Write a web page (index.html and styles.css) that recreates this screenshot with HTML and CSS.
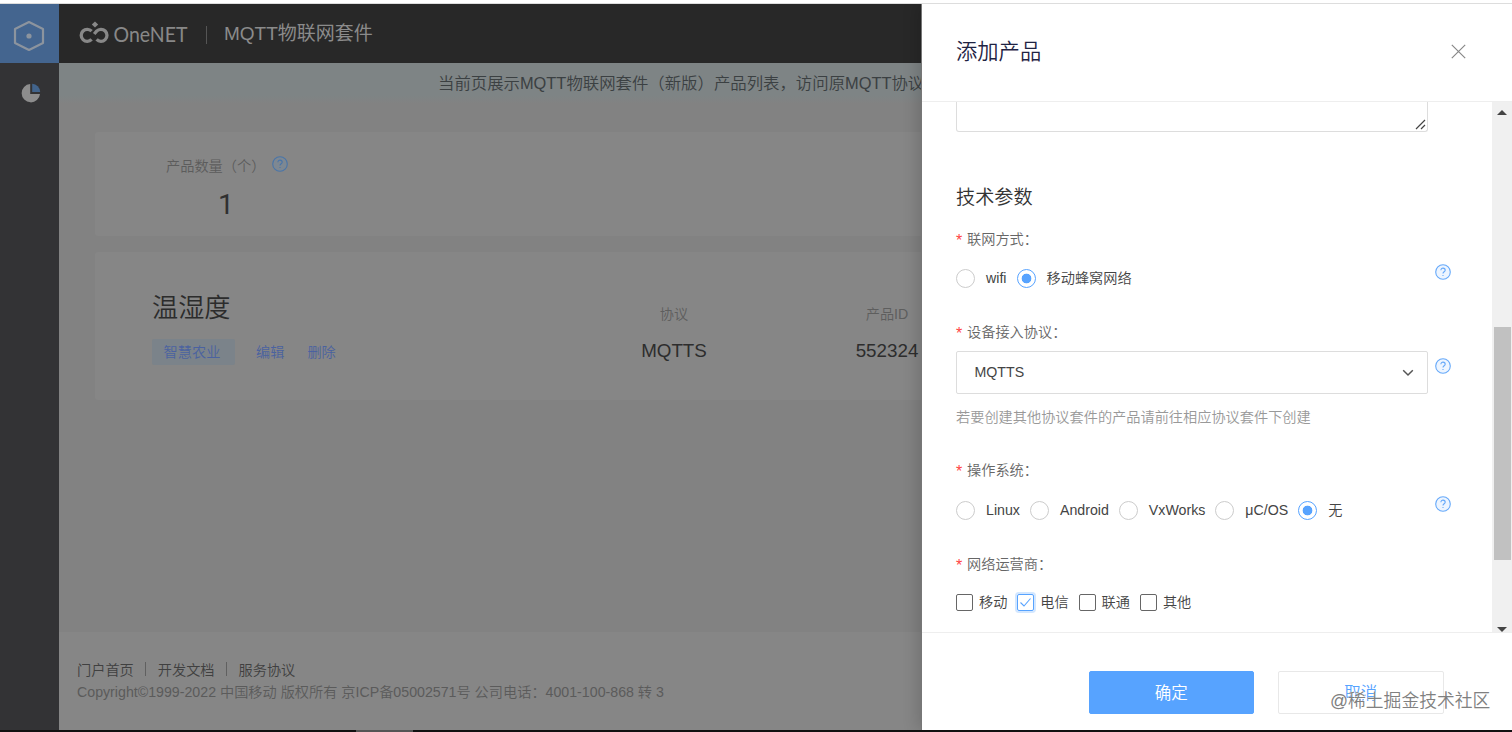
FILE: index.html
```
<!DOCTYPE html>
<html lang="zh-CN">
<head>
  <meta charset="UTF-8">
  <title>MQTT物联网套件</title>
  <link rel="stylesheet" href="styles.css">
</head>
<body>
  <svg class="defs" width="0" height="0">
    <symbol id="help" viewBox="0 0 16 16">
      <circle cx="8" cy="8" r="7.3" />
      <path d="M5.9 6.3c0-3 4.3-2.7 4.3-.1 0 1.5-2.2 1.6-2.2 3.2M8 10.9v1" />
    </symbol>
  </svg>

  <div class="edge-top"></div>
  <div class="app">
    <!-- 侧边栏 -->
    <div class="sidebar">
      <div class="side-logo">
        <svg width="32" height="32" viewBox="0 0 32 32">
          <path d="M16 2 30 9v14l-14 7L2 23V9z" fill="none" stroke="#8c949e" stroke-width="2.2" stroke-linejoin="round" />
          <circle cx="16" cy="16" r="2.6" fill="#8c949e" />
        </svg>
      </div>
      <div class="side-item">
        <svg width="20" height="20" viewBox="0 0 20 20">
          <path d="M9.2 1A9.2 9.2 0 1 0 19 11H9.2z" fill="#8d8d8d" />
          <path d="M11.2.8V9h8A8.6 8.6 0 0 0 11.2.8z" fill="#42648c" />
        </svg>
      </div>
    </div>

    <div class="main">
      <div class="header">
        <svg class="brand" width="110" height="26" viewBox="0 0 110 26">
          <g fill="none" stroke="#888" stroke-width="3.3">
            <path d="M12.6 10.2A6 6 0 1 0 12.6 18.4" />
            <path d="M17.6 18.4A6 6 0 1 0 17.6 10.2L15.2 13" />
          </g>
          <path d="M16 .4 19.2 3.4 16 6.4 12.8 3.4z" fill="#888" />
          <text x="34.5" y="21.3" textLength="74" lengthAdjust="spacingAndGlyphs">OneNET</text>
        </svg>
        <span class="header-line"></span>
        <span class="header-title">MQTT物联网套件</span>
      </div>

      <div class="notice">当前页展示MQTT物联网套件（新版）产品列表，访问原MQTT协议</div>

      <div class="content">
        <div class="card count-card">
          <div class="count-label">产品数量（个）<svg class="help"><use href="#help" /></svg></div>
          <div class="count-num">1</div>
        </div>
        <div class="card product">
          <div class="product-info">
            <div class="product-name">温湿度</div>
            <div class="product-links">
              <span class="tag">智慧农业</span>
              <span>编辑</span>
              <span>删除</span>
            </div>
          </div>
          <div class="product-col">
            <div class="col-label">协议</div>
            <div class="col-value">MQTTS</div>
          </div>
          <div class="product-col id-col">
            <div class="col-label">产品ID</div>
            <div class="col-value">552324</div>
          </div>
        </div>
      </div>

      <div class="footer">
        <div class="footer-links">
          <span>门户首页</span><i></i><span>开发文档</span><i></i><span>服务协议</span>
        </div>
        <div class="copyright">Copyright©1999-2022 中国移动 版权所有 京ICP备05002571号 公司电话：4001-100-868 转 3</div>
      </div>
    </div>
  </div>
  <div class="edge-bottom"><span></span></div>

  <!-- 添加产品抽屉 -->
  <div class="drawer">
    <div class="drawer-header">
      <span>添加产品</span>
      <svg width="15" height="15" viewBox="0 0 15 15">
        <path d="M.8.8l13.4 13.4M14.2.8.8 14.2" stroke="#888" stroke-width="1.2" />
      </svg>
    </div>

    <div class="drawer-body">
      <div class="form">
        <div class="textarea">
          <svg width="11" height="11" viewBox="0 0 11 11">
            <path d="M1 10 10 1M6 10l4-4" stroke="#444" stroke-width="1.2" />
          </svg>
        </div>

        <h3>技术参数</h3>

        <div class="label"><b>*</b>联网方式：</div>
        <div class="row net-row">
          <div class="field">
            <label class="radio"><i></i>wifi</label>
            <label class="radio checked"><i></i>移动蜂窝网络</label>
          </div>
          <svg class="help"><use href="#help" /></svg>
        </div>

        <div class="label protocol-label"><b>*</b>设备接入协议：</div>
        <div class="row select-row">
          <div class="select">
            MQTTS
            <svg width="12" height="8" viewBox="0 0 12 8">
              <path d="M1.2 1.3 6 6l4.8-4.7" fill="none" stroke="#555" stroke-width="1.5" />
            </svg>
          </div>
          <svg class="help"><use href="#help" /></svg>
        </div>
        <div class="hint">若要创建其他协议套件的产品请前往相应协议套件下创建</div>

        <div class="label os-label"><b>*</b>操作系统：</div>
        <div class="row os-row">
          <div class="field">
            <label class="radio"><i></i>Linux</label>
            <label class="radio"><i></i>Android</label>
            <label class="radio"><i></i>VxWorks</label>
            <label class="radio"><i></i>μC/OS</label>
            <label class="radio checked"><i></i>无</label>
          </div>
          <svg class="help"><use href="#help" /></svg>
        </div>

        <div class="label carrier-label"><b>*</b>网络运营商：</div>
        <div class="checks">
          <label class="check"><i></i>移动</label>
          <label class="check checked"><i><svg width="13" height="11" viewBox="0 0 13 11"><path d="M1.5 5.5 5 9l6.5-7.5" fill="none" stroke="#57a3ff" stroke-width="1.1" /></svg></i>电信</label>
          <label class="check"><i></i>联通</label>
          <label class="check"><i></i>其他</label>
        </div>
      </div>

      <div class="scrollbar">
        <span class="arrow up"></span>
        <span class="thumb"></span>
        <span class="arrow down"></span>
      </div>
    </div>

    <div class="drawer-footer">
      <div class="btn primary">确定</div>
      <div class="btn">取消</div>
    </div>
  </div>

  <div class="watermark">@稀土掘金技术社区</div>
</body>
</html>
```
FILE: styles.css
```
* {
  box-sizing: border-box;
}

body {
  margin: 0;
  width: 1512px;
  height: 732px;
  position: relative;
  overflow: hidden;
  display: flex;
  flex-direction: column;
  background: #fff;
  font-family: "Liberation Sans", "Noto Sans CJK SC", sans-serif;
  font-size: 14.2px;
  font-weight: 350;
  line-height: 20px;
  white-space: nowrap;
}

.defs {
  position: absolute;
}

.edge-top {
  height: 4px;
  border-bottom: 1px solid #ddd;
}

.edge-bottom {
  height: 2px;
  background: #111;
  padding-left: 356px;
}

.edge-bottom span {
  display: block;
  width: 57px;
  height: 2px;
  background: #555;
}

.app {
  height: 726px;
  display: flex;
}

.help {
  width: 16px;
  height: 16px;
  flex: none;
  fill: #edf5ff;
  stroke: #66a9fa;
  stroke-width: 1.1;
}

.help path {
  fill: none;
}

/* sidebar */
.sidebar {
  width: 59px;
  background: #333335;
}

.side-logo {
  height: 59px;
  background: #44658f;
  display: flex;
  align-items: center;
  justify-content: center;
  padding: 4px 1px 0 0;
}

.side-item {
  height: 59px;
  display: flex;
  align-items: center;
  justify-content: center;
  padding-left: 3px;
}

/* main */
.main {
  flex: 1;
  display: flex;
  flex-direction: column;
  background: #828282;
}

.header {
  height: 59px;
  background: #282828;
  display: flex;
  align-items: center;
  padding-left: 20px;
}

.brand text {
  font-family: Lato, sans-serif;
  font-size: 21px;
  font-weight: 400;
  fill: #888;
}

.header-line {
  width: 1px;
  height: 18px;
  margin: 3px 17px 0 17px;
  background: #555;
}

.header-title {
  padding-top: 1px;
  font-size: 19px;
  font-weight: 400;
  color: #8b8b8b;
}

.notice {
  height: 41px;
  padding-left: 379px;
  background: linear-gradient(#7e8485 80%, #828282);
  color: #3b4042;
  font-size: 16.4px;
  line-height: 41px;
}

.content {
  flex: 1;
  padding: 28px 36px 0;
}

.card {
  background: #868686;
  border-radius: 3px;
}

.count-card {
  height: 104px;
  padding: 24px 0 0 71px;
  margin-bottom: 16px;
}

.count-label {
  height: 20px;
  display: flex;
  align-items: center;
  color: #5c5c5c;
}

.count-label .help {
  margin: -4px 0 0 7px;
  fill: #7e8892;
  stroke: #4a75a8;
}

.count-num {
  width: 120px;
  margin-top: 14px;
  text-align: center;
  font-family: Roboto, sans-serif;
  font-size: 28.5px;
  font-weight: 400;
  line-height: 30px;
  color: #303030;
}

.product {
  height: 148px;
  display: flex;
}

.product-info {
  width: 476px;
  padding: 38px 0 0 57px;
}

.product-name {
  font-size: 26.2px;
  line-height: 36px;
  color: #2c2c2c;
}

.product-links {
  display: flex;
  align-items: center;
  gap: 23px;
  margin-top: 13px;
  color: #4a62a0;
}

.tag {
  width: 83px;
  height: 26px;
  margin-right: -2px;
  padding-right: 3px;
  line-height: 26px;
  text-align: center;
  background: #7b838a;
  border-radius: 2px;
}

.product-col {
  width: 206px;
  padding-top: 52px;
  text-align: center;
}

.id-col {
  width: 220px;
}

.col-label {
  color: #5e5e5e;
}

.col-value {
  margin-top: 17px;
  font-size: 18.8px;
  color: #2d2d2d;
}

.footer {
  height: 98px;
  padding: 28px 0 0 18px;
  background: #868686;
}

.footer-links {
  display: flex;
  align-items: center;
  color: #404040;
}

.footer-links i {
  width: 1px;
  height: 14px;
  margin: -3px 11.5px 0;
  background: #606060;
}

.copyright {
  margin-top: 2px;
  color: #5b5b5b;
}

/* drawer */
.drawer {
  position: absolute;
  top: 4px;
  right: 0;
  width: 591px;
  height: 726px;
  display: flex;
  flex-direction: column;
  background: #fff;
  border-left: 1px solid #777;
  box-shadow: -4px 0 14px rgba(0, 0, 0, 0.15);
  clip-path: inset(0 0 0 -30px);
}

.drawer-header {
  height: 98px;
  padding: 0 46px 2px 34px;
  border-bottom: 1px solid #eee;
  display: flex;
  align-items: center;
  justify-content: space-between;
  font-size: 21.3px;
  color: #1f2343;
}

.drawer-body {
  height: 531px;
  display: flex;
  justify-content: space-between;
  overflow: hidden;
  border-bottom: 1px solid #eee;
}

.form {
  padding-left: 34px;
  color: #444;
}

.textarea {
  width: 472px;
  height: 30px;
  border: 1px solid #ddd;
  border-top: none;
  border-radius: 0 0 3px 3px;
  display: flex;
  align-items: flex-end;
  justify-content: flex-end;
  padding: 1px;
}

h3 {
  margin: 51px 0 16px;
  font-size: 19.2px;
  font-weight: 350;
  line-height: 30px;
  color: #333;
}

.label {
  height: 20px;
  display: flex;
  color: #666;
}

.label b {
  width: 11px;
  padding-top: 2px;
  color: #f44;
  font-size: 16px;
  font-weight: 400;
}

.row {
  display: flex;
  align-items: flex-start;
}

.field {
  width: 472px;
  height: 20px;
  display: flex;
  gap: 10px;
}

.row .help {
  margin: -4px 0 0 7px;
}

.net-row {
  margin-top: 19px;
}

.protocol-label {
  margin-top: 34px;
}

.radio {
  display: flex;
  align-items: center;
}

.radio i {
  width: 19px;
  height: 19px;
  margin-right: 11px;
  border: 1px solid #ccc;
  border-radius: 50%;
}

.radio.checked i {
  border-color: #57a3ff;
  background: radial-gradient(circle, #57a3ff 4.5px, #fff 5.2px);
}

.select-row {
  margin-top: 9px;
}

.select {
  width: 472px;
  height: 43px;
  padding: 0 13px 1px 17.5px;
  border: 1px solid #ddd;
  border-radius: 2px;
  display: flex;
  align-items: center;
  justify-content: space-between;
}

.select svg {
  margin-top: 2px;
}

.select-row .help {
  margin-top: 7px;
}

.hint {
  margin-top: 13px;
  color: #999;
}

.os-label {
  margin-top: 33px;
}

.os-row {
  margin-top: 20px;
}

.carrier-label {
  margin-top: 34px;
}

.checks {
  display: flex;
  margin-top: 18px;
}

.check {
  width: 61.3px;
  display: flex;
  align-items: center;
}

.check i {
  width: 17px;
  height: 17px;
  margin-right: 6px;
  border: 1px solid #666;
  border-radius: 2px;
  display: flex;
  align-items: center;
  justify-content: center;
}

.check.checked i {
  border-color: #57a3ff;
  box-shadow: 0 0 0 2px #d3e7ff;
}

.scrollbar {
  width: 20px;
  background: #f0f0f0;
  display: flex;
  flex-direction: column;
  align-items: center;
  justify-content: space-between;
  padding-top: 8px;
}

.thumb {
  width: 17px;
  height: 233px;
  margin-top: 144px;
  background: #c1c1c1;
}

.arrow {
  border: 5px solid transparent;
}

.up {
  border-top: none;
  border-bottom-color: #444;
}

.down {
  border-bottom: none;
  border-top-color: #444;
}

.drawer-footer {
  flex: 1;
  display: flex;
  justify-content: flex-end;
  gap: 24px;
  padding: 38px 68.5px 0 0;
}

.btn {
  width: 165.5px;
  height: 43px;
  border: 1px solid #e8e8e8;
  border-radius: 2px;
  text-align: center;
  font-size: 16.5px;
  line-height: 42px;
  color: #57a3ff;
}

.btn.primary {
  background: #57a3ff;
  border-color: #57a3ff;
  color: #fff;
}

.watermark {
  position: absolute;
  left: 1330px;
  top: 691px;
  font-size: 17.8px;
  color: #808080;
  text-shadow: 0 0 1px #fff, 1px 1px 0 #fff;
}
```
